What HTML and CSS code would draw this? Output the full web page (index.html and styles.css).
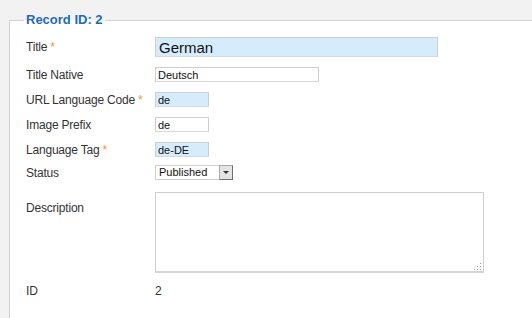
FILE: index.html
```html
<!DOCTYPE html>
<html lang="en">
<head>
    <meta charset="UTF-8">
    <title>Edit Language</title>
    <link rel="stylesheet" href="styles.css">
</head>
<body>
    <form class="page">
        <fieldset class="record">
            <legend class="record-title">Record ID: 2</legend>

            <div class="row">
                <label class="label">Title <span class="star">*</span></label>
                <input class="field field-title required" type="text" value="German">
            </div>

            <div class="row">
                <label class="label">Title Native</label>
                <input class="field field-native" type="text" value="Deutsch">
            </div>

            <div class="row">
                <label class="label">URL Language Code <span class="star">*</span></label>
                <input class="field field-short required" type="text" value="de">
            </div>

            <div class="row">
                <label class="label">Image Prefix</label>
                <input class="field field-short" type="text" value="de">
            </div>

            <div class="row">
                <label class="label">Language Tag <span class="star">*</span></label>
                <input class="field field-short required" type="text" value="de-DE">
            </div>

            <div class="row row-select">
                <label class="label">Status</label>
                <div class="select">
                    <span class="select-value">Published</span>
                    <span class="select-btn"></span>
                </div>
            </div>

            <div class="row row-top">
                <label class="label label-top">Description</label>
                <div class="textarea">
                    <span class="grip"></span>
                </div>
            </div>

            <div class="row row-id">
                <span class="label">ID</span>
                <span class="value">2</span>
            </div>
        </fieldset>
    </form>
</body>
</html>
```

FILE: styles.css
```css
* {
    margin: 0;
    padding: 0;
    box-sizing: border-box;
}

body {
    background: #f2f2f2;
    font-family: 'Liberation Sans', Arial, sans-serif;
    font-size: 12px;
    color: #333;
    height: 318px;
    overflow: hidden;
}

.page {
    padding: 12px 0 0 9px;
}

.record {
    background: white;
    border: 1px solid #d2d2d2;
    border-right: none;
    border-bottom: none;
    padding: 9px 0 0 14px;
    height: 306px;
}

.record-title {
    color: #1f6bb0;
    font-weight: bold;
    font-size: 13px;
    line-height: 16px;
    padding: 0 2px;
    margin-top: 1px;
}

.row {
    display: flex;
    align-items: center;
    margin-bottom: 10px;
}

.row-select {
    margin-top: -2px;
    margin-bottom: 12px;
}

.row-top {
    align-items: flex-start;
    margin-bottom: 11px;
}

.label {
    width: 131px;
    padding-left: 2px;
    color: #333;
    font-size: 12px;
    letter-spacing: -0.2px;
}

.label-top {
    padding-top: 9px;
}

.star {
    color: #f0932b;
}

.field {
    height: 15px;
    border: 1px solid #cfcfcf;
    border-bottom-color: #d8d8d8;
    background: white;
    font-family: 'Liberation Sans', Arial, sans-serif;
    font-size: 11px;
    color: #111;
    padding: 0 2px;
    outline: none;
}

.required {
    background: #d5ecfd;
}

.field-title {
    width: 283px;
    height: 20px;
    font-size: 15px;
    padding: 0 3px;
}

.field-native {
    width: 164px;
}

.field-short {
    width: 54px;
}

.select {
    display: flex;
    width: 78px;
    height: 15px;
    border: 1px solid #cfcfcf;
    background: white;
}

.select-value {
    flex: 1;
    font-size: 11px;
    line-height: 13px;
    padding-left: 3px;
    color: #111;
}

.select-btn {
    width: 14px;
    margin: -1px -1px -1px 0;
    background: #e4e4e4;
    border: 1px solid #6f6f6f;
    border-top-color: #a8a8a8;
    border-left-color: #a8a8a8;
    display: flex;
    align-items: center;
    justify-content: center;
}

.select-btn::after {
    content: "";
    border-left: 3px solid transparent;
    border-right: 3px solid transparent;
    border-top: 3px solid #333;
}

.textarea {
    position: relative;
    width: 329px;
    height: 81px;
    border: 1px solid #cfcfcf;
    border-bottom: 2px solid #d4d4d4;
    background: white;
}

.grip {
    position: absolute;
    right: 2px;
    bottom: 1px;
    width: 8px;
    height: 8px;
    background:
        radial-gradient(circle, #9a9a9a 0.8px, transparent 1px) 0 0 / 3px 3px;
    clip-path: polygon(100% 0, 100% 100%, 0 100%);
}

.value {
    font-size: 12px;
    color: #333;
}
```
